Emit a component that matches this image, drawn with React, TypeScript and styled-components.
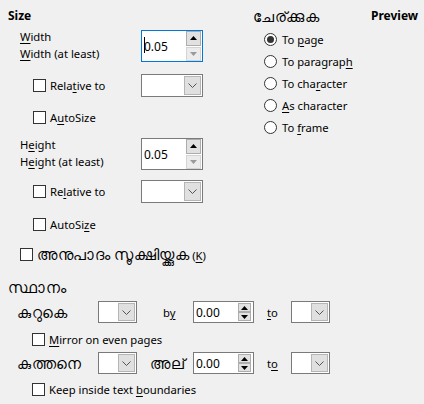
import React from "react";
import styled, { createGlobalStyle, css } from "styled-components";

const Global = createGlobalStyle`
  html, body { margin: 0; padding: 0; background: #f0f0f0; }
  body { font-family: "Noto Sans", "Liberation Sans", sans-serif; font-size: 11.25px; color: #000; }
  * { box-sizing: border-box; }
`;

const Root = styled.div`
  width: 424px;
  height: 404px;
  padding: 8px 0 0 8px;
  background: #f0f0f0;
  overflow: hidden;
`;

const Top = styled.div`
  display: flex;
`;

const SizeSection = styled.div`
  width: 245px;
  display: flex;
  flex-direction: column;
`;

const AnchorSection = styled.div`
  width: 118px;
  display: flex;
  flex-direction: column;
`;

const PreviewSection = styled.div`
  display: flex;
  flex-direction: column;
`;

const Heading = styled.div<{ $bold?: boolean }>`
  height: 16px;
  line-height: 16px;
  font-weight: ${(p) => (p.$bold ? 700 : 400)};
  font-size: ${(p) => (p.$bold ? 12 : 11.25)}px;
  white-space: nowrap;
`;

const Ml = styled.span`
  font-size: 14.5px;
  letter-spacing: 0.5px;
  line-height: 16px;
`;

const U = styled.span`
  text-decoration: underline;
  text-underline-offset: 2px;
`;

const SpinRow = styled.div<{ $mt: number }>`
  display: flex;
  align-items: flex-start;
  margin-top: ${(p) => p.$mt}px;
  padding-left: 12px;
  height: 32px;
`;

const LabelStack = styled.div`
  width: 121px;
  margin-top: -2px;
  display: flex;
  flex-direction: column;
  line-height: 17px;
  white-space: nowrap;
`;

const CheckRow = styled.div<{ $mt: number; $indent: number; $h?: number }>`
  display: flex;
  align-items: center;
  margin-top: ${(p) => p.$mt}px;
  padding-left: ${(p) => p.$indent}px;
  height: ${(p) => p.$h ?? 23}px;
  white-space: nowrap;
`;

const CheckLabel = styled.label<{ $w?: number }>`
  display: flex;
  align-items: center;
  gap: 4px;
  width: ${(p) => (p.$w ? `${p.$w}px` : "auto")};
`;

const Box = styled.span`
  width: 13px;
  height: 13px;
  border: 1px solid #333;
  background: #fff;
  flex: none;
`;

const RadioList = styled.div`
  display: flex;
  flex-direction: column;
  padding-left: 11px;
  margin-top: 4px;
`;

const RadioRow = styled.div`
  display: flex;
  align-items: center;
  gap: 5px;
  height: 22px;
  white-space: nowrap;
`;

const Radio = styled.span<{ $on?: boolean }>`
  width: 13px;
  height: 13px;
  border: 1px solid #333;
  border-radius: 50%;
  background: #fff;
  flex: none;
  display: flex;
  align-items: center;
  justify-content: center;
  &::after {
    content: "";
    width: 7px;
    height: 7px;
    border-radius: 50%;
    background: ${(p) => (p.$on ? "#333" : "transparent")};
  }
`;

const SpinBox = styled.div<{ $w: number; $h: number; $focus?: boolean }>`
  width: ${(p) => p.$w}px;
  height: ${(p) => p.$h}px;
  border: 1px solid ${(p) => (p.$focus ? "#0078d7" : "#7a7a7a")};
  background: #fff;
  display: flex;
  align-items: center;
  position: relative;
  flex: none;
`;

const SpinValue = styled.span`
  padding-left: 2px;
  flex: 1;
  position: relative;
  font-size: 12px;
`;

const Caret = styled.span`
  position: absolute;
  left: 2px;
  top: -1px;
  width: 1px;
  height: 16px;
  background: #000;
`;

const SpinButtons = styled.div<{ $small?: boolean }>`
  align-self: stretch;
  display: flex;
  flex-direction: column;
  gap: ${(p) => (p.$small ? 0 : 1)}px;
  padding: ${(p) => (p.$small ? "1px 2px 1px 0" : "0 1px 0 0")};
  width: ${(p) => (p.$small ? 15 : 16)}px;
`;

const SpinBtn = styled.div<{ $disabled?: boolean }>`
  flex: 1;
  display: flex;
  align-items: center;
  justify-content: center;
  background: ${(p) => (p.$disabled ? "#ececec" : "#e1e1e1")};
  border: 1px solid ${(p) => (p.$disabled ? "#d4d4d4" : "#adadad")};
`;

const Combo = styled.div<{ $w: number; $h: number; $btn: number }>`
  width: ${(p) => p.$w}px;
  height: ${(p) => p.$h}px;
  border: 1px solid #7a7a7a;
  background: #fff;
  display: flex;
  justify-content: flex-end;
  flex: none;
  ${(p) => css`
    & > div {
      width: ${p.$btn}px;
    }
  `}
`;

const ComboBtn = styled.div`
  margin: 1px;
  background: #e0e0e0;
  border: 1px solid #b5b5b5;
  display: flex;
  align-items: center;
  justify-content: center;
`;

const Bottom = styled.div`
  display: flex;
  flex-direction: column;
  margin-top: 13px;
`;

const PosRow = styled.div<{ $mt: number }>`
  display: flex;
  align-items: center;
  height: 22px;
  margin-top: ${(p) => p.$mt}px;
  padding-left: 9px;
  white-space: nowrap;
`;

const PosLabel = styled.span<{ $w: number; $ml?: number }>`
  width: ${(p) => p.$w}px;
  margin-left: ${(p) => p.$ml ?? 0}px;
  flex: none;
`;

const Chevron = () => (
  <svg width="9" height="5" viewBox="0 0 9 5">
    <polyline points="0.5,0.5 4.5,4.5 8.5,0.5" fill="none" stroke="#555" strokeWidth="1" />
  </svg>
);

const Up = ({ color = "#000" }: { color?: string }) => (
  <svg width="7" height="4" viewBox="0 0 7 4">
    <polygon points="0,4 3.5,0 7,4" fill={color} />
  </svg>
);
const Down = ({ color = "#000" }: { color?: string }) => (
  <svg width="7" height="4" viewBox="0 0 7 4">
    <polygon points="0,0 3.5,4 7,0" fill={color} />
  </svg>
);

const BigSpin = ({ focus, caret }: { focus?: boolean; caret?: boolean }) => (
  <SpinBox $w={62} $h={32} $focus={focus}>
    <SpinValue>
      0.05
      {caret && <Caret />}
    </SpinValue>
    <SpinButtons>
      <SpinBtn>
        <Up />
      </SpinBtn>
      <SpinBtn $disabled>
        <Down color="#9a9a9a" />
      </SpinBtn>
    </SpinButtons>
  </SpinBox>
);

const SmallSpin = () => (
  <SpinBox $w={61} $h={22}>
    <SpinValue>0.00</SpinValue>
    <SpinButtons $small>
      <SpinBtn>
        <Up />
      </SpinBtn>
      <SpinBtn>
        <Down />
      </SpinBtn>
    </SpinButtons>
  </SpinBox>
);

const ComboBox = ({ w, h, btn }: { w: number; h: number; btn: number }) => (
  <Combo $w={w} $h={h} $btn={btn}>
    <ComboBtn>
      <Chevron />
    </ComboBtn>
  </Combo>
);

export default function App() {
  return (
    <Root>
      <Global />
      <Top>
        <SizeSection>
          <Heading $bold>Size</Heading>
          <SpinRow $mt={6}>
            <LabelStack>
              <span>
                <U>W</U>idth
              </span>
              <span>
                <U>W</U>idth (at least)
              </span>
            </LabelStack>
            <BigSpin focus caret />
          </SpinRow>
          <CheckRow $mt={12} $indent={25}>
            <CheckLabel $w={108}>
              <Box />
              <span>
                Rela<U>t</U>ive to
              </span>
            </CheckLabel>
            <ComboBox w={62} h={23} btn={17} />
          </CheckRow>
          <CheckRow $mt={9} $indent={25}>
            <CheckLabel>
              <Box />
              <span>
                A<U>u</U>toSize
              </span>
            </CheckLabel>
          </CheckRow>
          <SpinRow $mt={9}>
            <LabelStack>
              <span>
                H<U>e</U>ight
              </span>
              <span>
                H<U>e</U>ight (at least)
              </span>
            </LabelStack>
            <BigSpin />
          </SpinRow>
          <CheckRow $mt={10} $indent={25}>
            <CheckLabel $w={108}>
              <Box />
              <span>
                Re<U>l</U>ative to
              </span>
            </CheckLabel>
            <ComboBox w={62} h={23} btn={17} />
          </CheckRow>
          <CheckRow $mt={10} $indent={25}>
            <CheckLabel>
              <Box />
              <span>
                AutoSi<U>z</U>e
              </span>
            </CheckLabel>
          </CheckRow>
          <CheckRow $mt={7} $indent={12}>
            <CheckLabel>
              <Box />
              <span>
                <Ml>അനുപാദം സൂക്ഷിയ്ക്കുക</Ml> (<U>K</U>)
              </span>
            </CheckLabel>
          </CheckRow>
        </SizeSection>
        <AnchorSection>
          <Heading>
            <Ml>ചേര്ക്കുക</Ml>
          </Heading>
          <RadioList>
            <RadioRow>
              <Radio $on />
              <span>
                To <U>p</U>age
              </span>
            </RadioRow>
            <RadioRow>
              <Radio />
              <span>
                To paragrap<U>h</U>
              </span>
            </RadioRow>
            <RadioRow>
              <Radio />
              <span>
                To cha<U>r</U>acter
              </span>
            </RadioRow>
            <RadioRow>
              <Radio />
              <span>
                <U>A</U>s character
              </span>
            </RadioRow>
            <RadioRow>
              <Radio />
              <span>
                To <U>f</U>rame
              </span>
            </RadioRow>
          </RadioList>
        </AnchorSection>
        <PreviewSection>
          <Heading $bold>Preview</Heading>
        </PreviewSection>
      </Top>
      <Bottom>
        <Heading>
          <Ml>സ്ഥാനം</Ml>
        </Heading>
        <PosRow $mt={6}>
          <PosLabel $w={81}>
            <Ml>കുറുകെ</Ml>
          </PosLabel>
          <ComboBox w={39} h={22} btn={17} />
          <PosLabel $w={30} $ml={26}>
            b<U>y</U>
          </PosLabel>
          <SmallSpin />
          <PosLabel $w={24} $ml={13}>
            <U>t</U>o
          </PosLabel>
          <ComboBox w={39} h={22} btn={17} />
        </PosRow>
        <CheckRow $mt={5} $indent={24} $h={22}>
          <CheckLabel>
            <Box />
            <span>
              <U>M</U>irror on even pages
            </span>
          </CheckLabel>
        </CheckRow>
        <PosRow $mt={2}>
          <PosLabel $w={81}>
            <Ml>കുത്തനെ</Ml>
          </PosLabel>
          <ComboBox w={39} h={22} btn={17} />
          <PosLabel $w={43} $ml={13}>
            <Ml>അല്</Ml>
          </PosLabel>
          <SmallSpin />
          <PosLabel $w={24} $ml={13}>
            t<U>o</U>
          </PosLabel>
          <ComboBox w={39} h={22} btn={17} />
        </PosRow>
        <CheckRow $mt={4} $indent={24} $h={22}>
          <CheckLabel>
            <Box />
            <span>
              Keep inside text <U>b</U>oundaries
            </span>
          </CheckLabel>
        </CheckRow>
      </Bottom>
    </Root>
  );
}
